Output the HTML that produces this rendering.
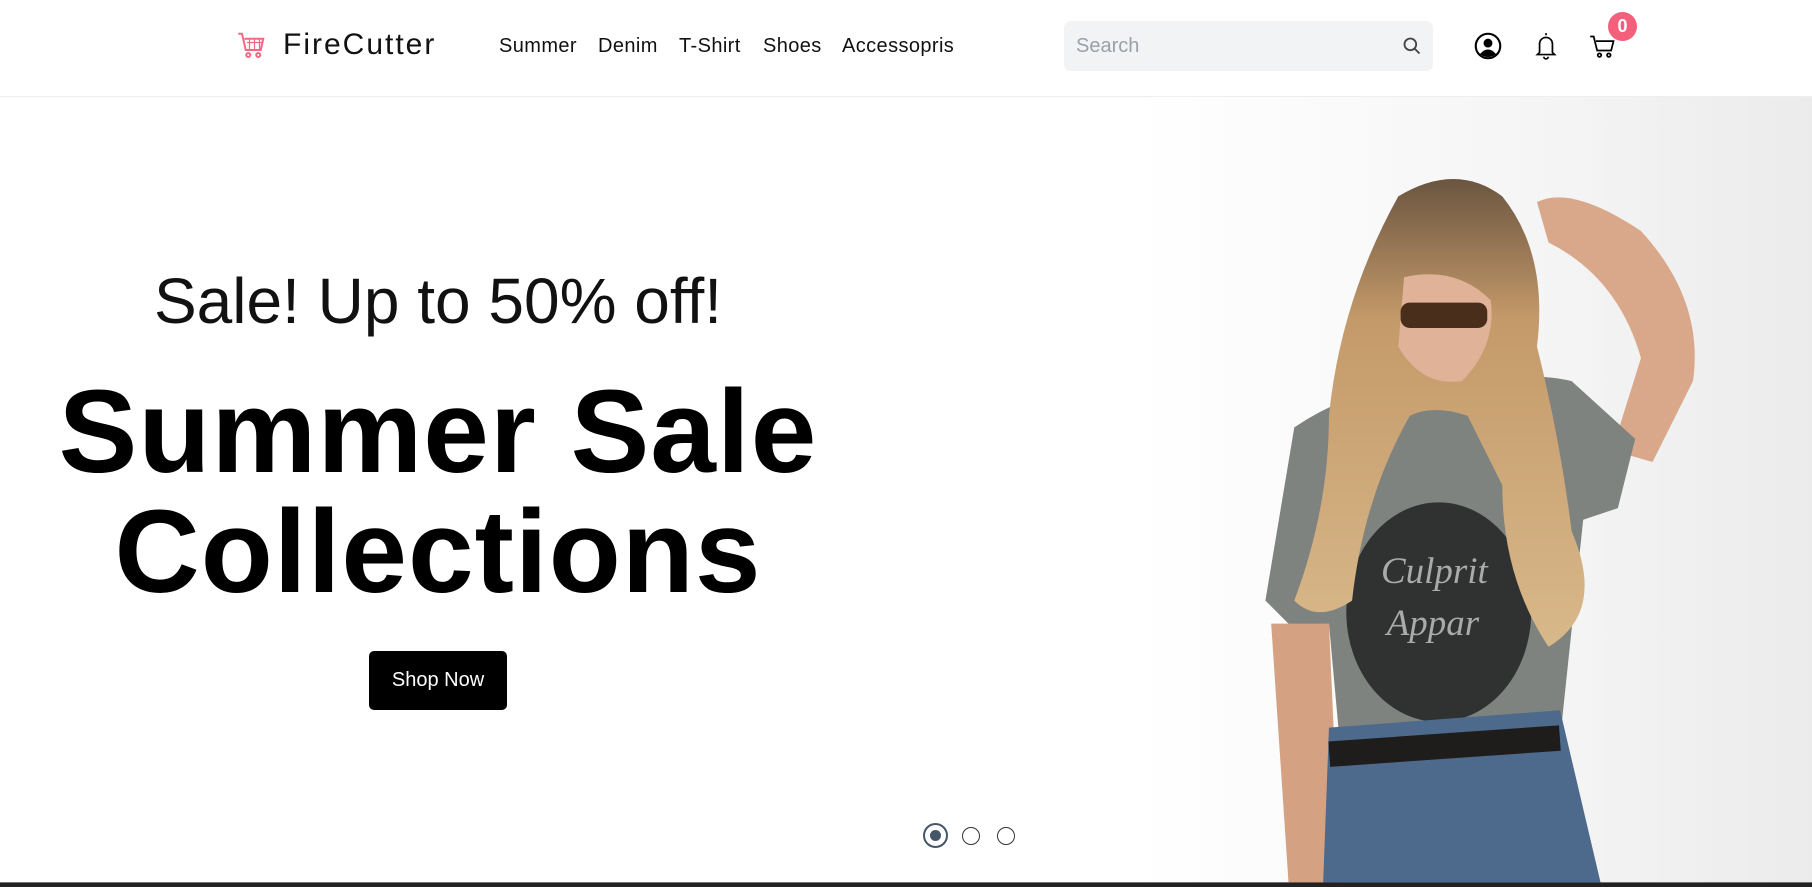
<!DOCTYPE html>
<html><head><meta charset="utf-8"><style>
*{margin:0;padding:0;box-sizing:border-box}
body{width:1812px;height:887px;overflow:hidden;background:#fff;font-family:"Liberation Sans",Arial,sans-serif;position:relative;color:#000}
.hdr{position:absolute;left:0;top:0;width:1812px;height:97px;border-bottom:1px solid #eee;background:#fff;z-index:3}
.abs{position:absolute}
.nav a{position:absolute;top:35px;font-size:20px;letter-spacing:0.4px;color:#111;text-decoration:none}
</style></head><body>
<svg class="abs" style="left:0;top:0;z-index:0" width="1812" height="887" viewBox="0 0 1568 768" preserveAspectRatio="none">
<defs>
<linearGradient id="bg" x1="0" x2="1"><stop offset="0" stop-color="#fff"/><stop offset="0.6" stop-color="#f5f5f5"/><stop offset="1" stop-color="#ebebeb"/></linearGradient>
<linearGradient id="hair" x1="0" y1="0" x2="0" y2="1"><stop offset="0" stop-color="#6b5540"/><stop offset="0.3" stop-color="#c49a6a"/><stop offset="1" stop-color="#d8b88a"/></linearGradient>
</defs>
<rect x="980" y="84" width="588" height="680" fill="url(#bg)"/>
<path d="M1330 175 Q1360 160 1420 200 Q1475 260 1465 330 L1430 400 L1395 390 L1420 310 Q1400 240 1340 210 Z" fill="#d9a88a"/>
<path d="M1120 370 Q1180 330 1240 335 Q1320 320 1360 330 L1415 380 L1400 440 L1370 450 L1350 640 L1160 650 L1150 540 L1120 545 L1095 520 Z" fill="#7f837f"/>
<ellipse cx="1245" cy="530" rx="80" ry="95" fill="#2f3230"/>
<text x="1195" y="505" font-family="Liberation Serif,serif" font-style="italic" font-size="32" fill="#aaa">Culprit</text>
<text x="1200" y="550" font-family="Liberation Serif,serif" font-style="italic" font-size="32" fill="#aaa">Appar</text>
<path d="M1100 540 L1150 540 L1160 764 L1115 764 Z" fill="#d4a283"/>
<path d="M1150 630 L1350 615 L1385 764 L1145 764 Z" fill="#4d6a8c"/>
<rect x="1150" y="635" width="200" height="22" fill="#1f1d1c" transform="rotate(-4 1250 645)"/>
<path d="M1210 170 Q1260 140 1300 170 Q1340 220 1330 300 Q1350 380 1360 460 Q1390 530 1340 560 Q1300 500 1300 420 L1270 360 Q1240 350 1220 360 Q1180 430 1170 520 Q1140 540 1120 520 Q1150 440 1150 360 Q1160 260 1210 170 Z" fill="url(#hair)"/>
<path d="M1215 240 Q1260 230 1290 260 Q1295 300 1265 330 Q1230 335 1210 300 Z" fill="#e0b298"/>
<rect x="1212" y="262" width="75" height="22" rx="8" fill="#4a2e1c"/>
<rect x="0" y="764" width="1568" height="4" fill="#222"/>
</svg>

<div class="hdr">
  <svg class="abs" style="left:236px;top:30px" width="32" height="30" viewBox="0 0 24 24" fill="none" stroke="#f06a85" stroke-width="1.6"><path d="M1 3h3l3 13h12l2-9H6"/><path d="M8 10h12M10 7v9M14 7v9M18 7v9" stroke-width="1"/><circle cx="9" cy="20" r="1.6"/><circle cx="17" cy="20" r="1.6"/></svg>
  <div class="abs" style="left:283px;top:28px;font-size:30px;letter-spacing:2px;color:#111">FireCutter</div>
  <div class="nav">
    <a style="left:499px">Summer</a><a style="left:598px">Denim</a><a style="left:679px">T-Shirt</a><a style="left:763px">Shoes</a><a style="left:842px">Accessopris</a>
  </div>
  <div class="abs" style="left:1064px;top:21px;width:369px;height:50px;background:#f2f3f5;border-radius:7px">
    <span class="abs" style="left:12px;top:14px;font-size:20px;color:#9aa0aa">Search</span>
    <svg class="abs" style="left:338px;top:15px" width="20" height="20" viewBox="0 0 24 24" fill="none" stroke="#444" stroke-width="2.2"><circle cx="10" cy="10" r="7"/><path d="M15 15l6 6"/></svg>
  </div>
  <svg class="abs" style="left:1474px;top:32px" width="28" height="28" viewBox="0 0 24 24"><circle cx="12" cy="12" r="10.5" fill="none" stroke="#000" stroke-width="1.8"/><circle cx="12" cy="9.5" r="3.8"/><path d="M5 19 Q12 11 19 19 Q12 24 5 19Z"/></svg>
  <svg class="abs" style="left:1533px;top:31px" width="26" height="30" viewBox="0 0 24 28" fill="none" stroke="#000" stroke-width="1.6"><path d="M12 2v2M6 20V12a6 6 0 0 1 12 0v8l2 2H4z"/><path d="M10 24a2 2 0 0 0 4 0"/></svg>
  <svg class="abs" style="left:1589px;top:33px" width="28" height="28" viewBox="0 0 24 24" fill="none" stroke="#000" stroke-width="1.5"><path d="M1 3h3l3 12h12l2-8H6"/><circle cx="9" cy="19" r="1.5"/><circle cx="17" cy="19" r="1.5"/></svg>
  <div class="abs" style="left:1608px;top:12px;width:29px;height:29px;border-radius:50%;background:#f45f7c;color:#fff;font-size:18px;font-weight:bold;text-align:center;line-height:29px">0</div>
</div>

<div class="abs" style="left:0;top:264px;width:876px;text-align:center;font-size:64px;color:#111;z-index:2">Sale! Up to 50% off!</div>
<div class="abs" style="left:0;top:372px;width:876px;text-align:center;font-size:118px;font-weight:bold;line-height:120px;letter-spacing:1px;z-index:2">Summer Sale<br>Collections</div>
<div class="abs" style="left:369px;top:651px;width:138px;height:59px;background:#000;border-radius:5px;color:#fff;font-size:20px;text-align:center;line-height:59px;z-index:2">Shop Now</div>

<div class="abs" style="left:923px;top:823px;width:25px;height:25px;border-radius:50%;border:2px solid #475569;z-index:2"><div style="margin:5px auto;width:11px;height:11px;border-radius:50%;background:#475569"></div></div>
<div class="abs" style="left:962px;top:827px;width:18px;height:18px;border-radius:50%;border:1.5px solid #333;z-index:2"></div>
<div class="abs" style="left:997px;top:827px;width:18px;height:18px;border-radius:50%;border:1.5px solid #333;z-index:2"></div>
</body></html>
